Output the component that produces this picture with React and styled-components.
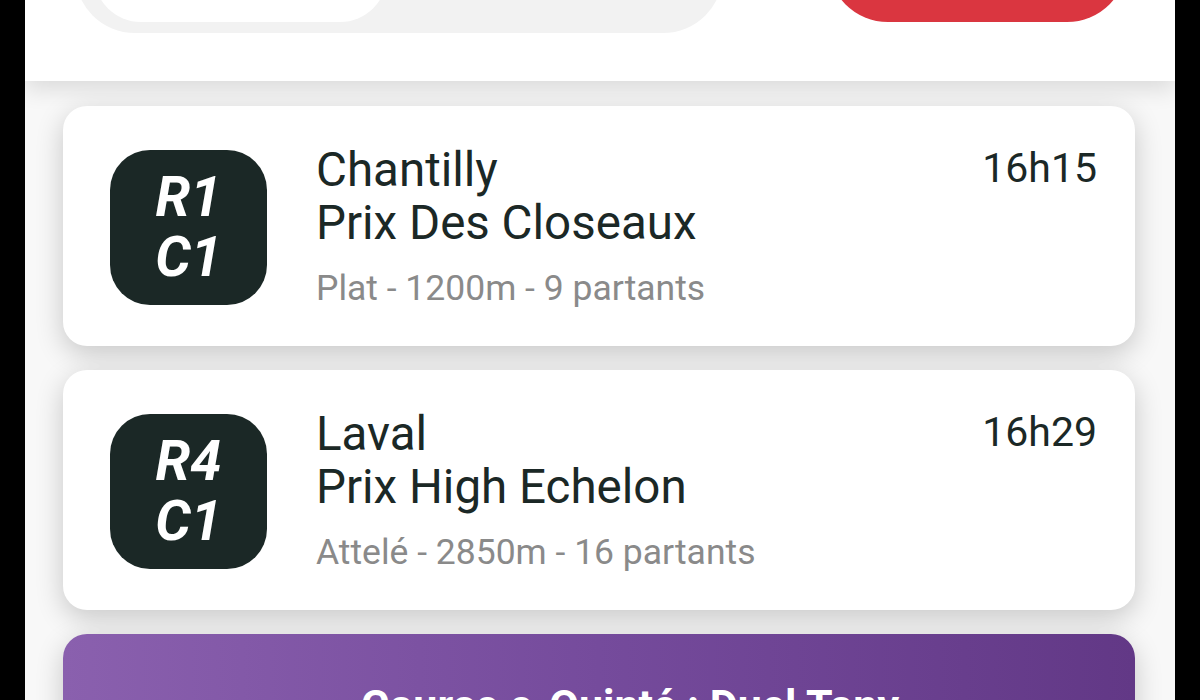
import React from 'react';
import styled, { createGlobalStyle } from 'styled-components';

const GlobalStyle = createGlobalStyle`
    html, body {
        margin: 0;
        padding: 0;
        background: #000;
    }
    body {
        font-family: Roboto, "Noto Sans", "Liberation Sans", sans-serif;
    }
`;

const Frame = styled.div`
    width: 1150px;
    height: 700px;
    margin: 0 25px;
    background: #f8f8f8;
    overflow: hidden;
    display: flex;
    flex-direction: column;
`;

const Header = styled.header`
    position: relative;
    z-index: 1;
    height: 81px;
    flex-shrink: 0;
    background: #fff;
    display: flex;
    justify-content: space-between;
    align-items: flex-start;
    padding: 0 48px 0 50px;
    box-shadow: 0 8px 22px rgba(0, 0, 0, 0.12);
    overflow: hidden;
`;

const Segment = styled.div`
    width: 648px;
    height: 120px;
    margin-top: -87px;
    box-sizing: border-box;
    padding: 0 19px 11px;
    border-radius: 60px;
    background: #f2f2f2;
    display: flex;
    align-items: flex-end;
`;

const SegmentTab = styled.div`
    width: 293px;
    height: 100px;
    border-radius: 47px;
    background: #fff;
`;

const RedButton = styled.div`
    width: 299px;
    height: 120px;
    margin-top: -98px;
    border-radius: 60px;
    background: #da3640;
`;

const List = styled.main`
    display: flex;
    flex-direction: column;
    gap: 24px;
    padding: 25px 40px 0 38px;
`;

const Card = styled.div`
    display: flex;
    align-items: center;
    gap: 49px;
    padding: 38px 38px 36px 47px;
    background: #fff;
    border-radius: 24px;
    box-shadow: 0 8px 28px rgba(0, 0, 0, 0.2);
`;

const Badge = styled.div`
    width: 157px;
    height: 155px;
    flex-shrink: 0;
    border-radius: 40px;
    background: #1b2826;
    color: #fff;
    display: flex;
    flex-direction: column;
    align-items: center;
    justify-content: center;
    font-size: 56px;
    line-height: 60px;
    font-weight: 700;
    font-style: italic;
`;

const Body = styled.div`
    flex: 1;
    display: flex;
    justify-content: space-between;
    align-items: flex-start;
`;

const Info = styled.div`
    display: flex;
    flex-direction: column;
`;

const Title = styled.div`
    font-size: 47.5px;
    line-height: 53px;
    color: #1b2826;
`;

const Meta = styled.div`
    margin-top: 16px;
    font-size: 35.5px;
    line-height: 44px;
    color: #8a8a8a;
`;

const Time = styled.div`
    font-size: 41px;
    line-height: 48px;
    color: #1b2826;
`;

const Promo = styled.div`
    height: 160px;
    box-sizing: border-box;
    padding: 46px 0 0 62px;
    border-radius: 24px;
    background: linear-gradient(90deg, #8a60ae 0%, #754b9c 50%, #623886 100%);
    color: #fff;
    text-align: center;
    font-size: 43px;
    font-weight: 700;
    line-height: 50px;
    box-shadow: 0 8px 28px rgba(0, 0, 0, 0.2);
`;

const races = [
    { r: 'R1', c: 'C1', venue: 'Chantilly', name: 'Prix Des Closeaux', meta: 'Plat - 1200m - 9 partants', time: '16h15' },
    { r: 'R4', c: 'C1', venue: 'Laval', name: 'Prix High Echelon', meta: 'Attelé - 2850m - 16 partants', time: '16h29' },
];

const App = () => {
    return (
        <>
            <GlobalStyle />
            <Frame>
                <Header>
                    <Segment>
                        <SegmentTab />
                    </Segment>
                    <RedButton />
                </Header>
                <List>
                    {races.map((race) => (
                        <Card key={race.r + race.c}>
                            <Badge>
                                <span>{race.r}</span>
                                <span>{race.c}</span>
                            </Badge>
                            <Body>
                                <Info>
                                    <Title>{race.venue}</Title>
                                    <Title>{race.name}</Title>
                                    <Meta>{race.meta}</Meta>
                                </Info>
                                <Time>{race.time}</Time>
                            </Body>
                        </Card>
                    ))}
                    <Promo>Course e-Quinté : Duel Tony</Promo>
                </List>
            </Frame>
        </>
    );
};

export default App;
